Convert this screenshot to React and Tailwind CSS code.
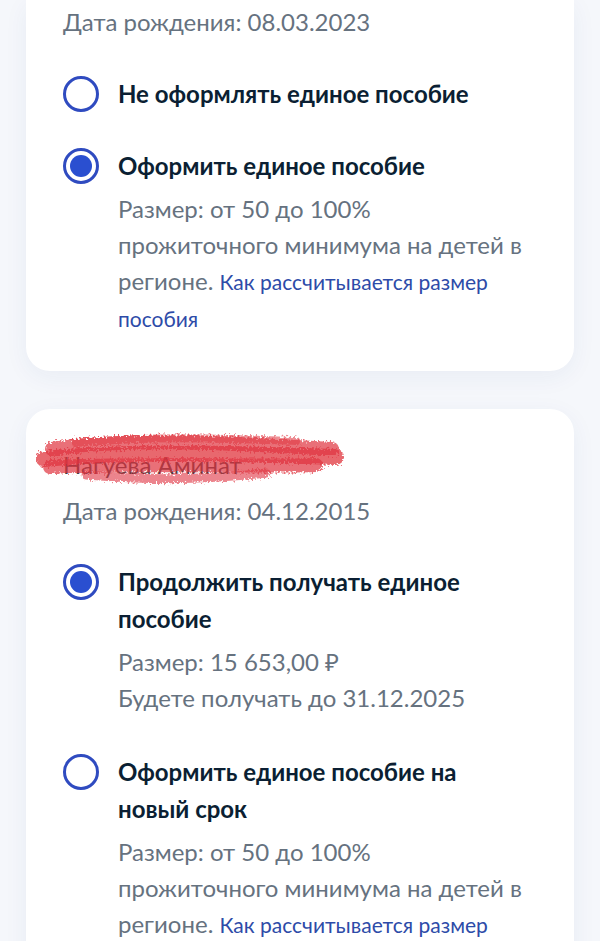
import React from "react";

const font = { fontFamily: "Lato, 'Noto Sans', sans-serif" };

function Radio({ checked }) {
  return (
    <span className="mt-[0.5px] flex h-[36px] w-[36px] shrink-0 items-center justify-center rounded-full border-[3px] border-[#2f4bc0]">
      {checked && <span className="h-[22px] w-[22px] rounded-full bg-[#2a4fd0]" />}
    </span>
  );
}

function Option({ checked, title, children }) {
  return (
    <div className="flex items-start gap-[19px]">
      <Radio checked={checked} />
      <div className="flex-1">
        <div className="text-[24px] font-bold leading-[37px] text-[#0b1f33]">{title}</div>
        {children && (
          <div className="mt-[7px] text-[24px] leading-[36px] text-[#66727f]">{children}</div>
        )}
      </div>
    </div>
  );
}

function HowLink() {
  return (
    <span className="text-[21px] text-[#2d4ba8]">Как рассчитывается размер пособия</span>
  );
}

function Scribble() {
  return (
    <svg
      className="pointer-events-none absolute left-[-27px] top-[-20px]"
      width="310"
      height="66"
      viewBox="0 0 310 66"
    >
      <defs>
        <filter id="rough" x="-5%" y="-20%" width="110%" height="140%">
          <feTurbulence type="fractalNoise" baseFrequency="0.5" numOctaves="3" result="n" />
          <feDisplacementMap in="SourceGraphic" in2="n" scale="9" />
        </filter>
      </defs>
      <g filter="url(#rough)" fill="none" strokeLinecap="round" stroke="#e0343f">
        <path d="M16 22 C 80 12, 170 14, 296 22" strokeWidth="14" opacity="0.7" />
        <path d="M8 32 C 90 24, 190 26, 300 30" strokeWidth="16" opacity="0.75" />
        <path d="M14 40 C 100 36, 200 40, 280 38" strokeWidth="14" opacity="0.7" />
        <path d="M40 16 C 120 8, 200 12, 260 14" strokeWidth="8" opacity="0.55" />
        <path d="M50 48 C 120 54, 180 52, 230 46" strokeWidth="9" opacity="0.6" />
      </g>
    </svg>
  );
}

export default function App() {
  return (
    <div className="min-h-[941px] bg-[#f5f7fb] px-[26px] pb-10" style={font}>
      {/* child 1 (top of card scrolled away) */}
      <div className="rounded-b-[24px] bg-white pb-[34px] pl-[37px] pr-[44px] pt-[4px] shadow-[0_6px_24px_rgba(40,70,140,0.06)]">
        <div className="text-[24px] leading-[36px] text-[#66727f]">Дата рождения: 08.03.2023</div>

        <div className="mt-[35px] flex flex-col gap-[35px]">
          <Option checked={false} title="Не оформлять единое пособие" />
          <Option checked title="Оформить единое пособие">
            Размер: от 50 до 100% прожиточного минимума на детей в регионе. <HowLink />
          </Option>
        </div>
      </div>

      {/* child 2 */}
      <div className="mt-[38px] rounded-[24px] bg-white pb-[34px] pl-[37px] pr-[44px] pt-[38px] shadow-[0_6px_24px_rgba(40,70,140,0.06)]">
        <div className="relative w-fit text-[24px] leading-[36px] text-[#3b3f46]">
          Нагуева Аминат
          <Scribble />
        </div>
        <div className="mt-[10px] text-[24px] leading-[36px] text-[#66727f]">Дата рождения: 04.12.2015</div>

        <div className="mt-[34px] flex flex-col gap-[37px]">
          <Option checked title="Продолжить получать единое пособие">
            Размер: 15 653,00 ₽
            <br />
            Будете получать до 31.12.2025
          </Option>
          <Option checked={false} title="Оформить единое пособие на новый срок">
            Размер: от 50 до 100% прожиточного минимума на детей в регионе. <HowLink />
          </Option>
        </div>
      </div>
    </div>
  );
}
